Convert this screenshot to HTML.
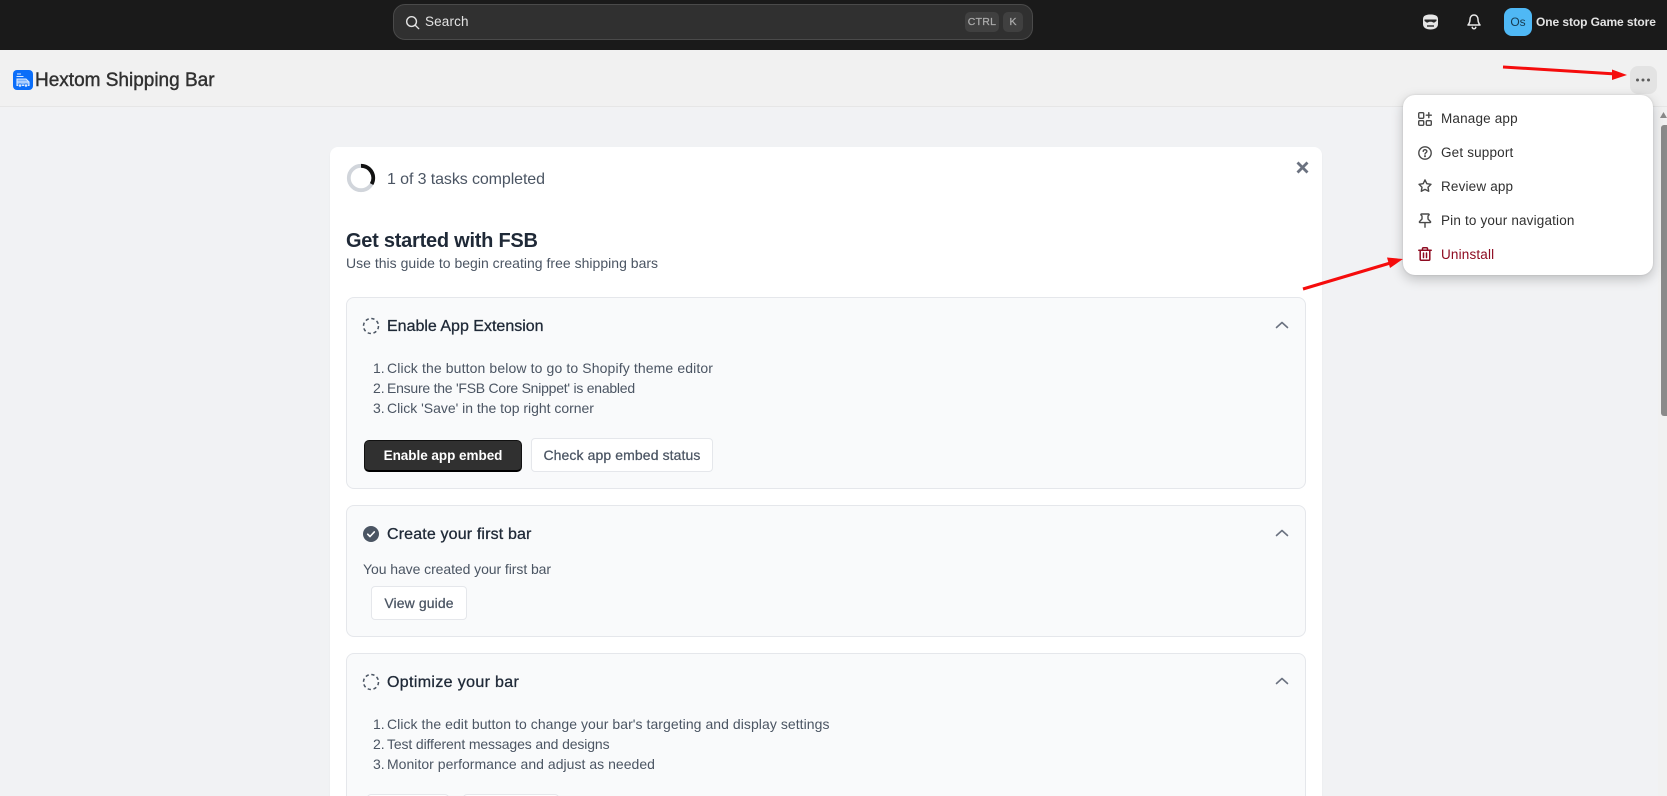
<!DOCTYPE html>
<html><head><meta charset="utf-8"><title>Hextom Shipping Bar</title>
<style>
html,body{margin:0;padding:0;width:1667px;height:796px;overflow:hidden;background:#f1f2f4;font-family:"Liberation Sans",sans-serif}
*{box-sizing:border-box}
#w{position:absolute;left:0;top:0;width:1667px;height:796px;overflow:hidden;background:#f1f2f4}
.a{position:absolute}
.t{position:absolute;white-space:nowrap;line-height:20px;height:20px}
svg{position:absolute;display:block;overflow:visible}
.item{position:absolute;left:346px;width:960px;background:#f9fafb;border:1px solid #e5e7eb;border-radius:8px}
.h{font-size:16px;color:#1f2937;-webkit-text-stroke:.3px #1f2937}
.b{font-size:14px;color:#4b5563}
.btn{position:absolute;background:#fff;border:1px solid #e5e7eb;border-radius:4px;color:#4b5563;font-size:14px;text-align:center;-webkit-text-stroke:.25px #4b5563;letter-spacing:.1px;line-height:32px}
.m{font-size:13.5px;color:#303030;letter-spacing:.17px;left:1441px}
.chev{fill:none;stroke:#6b7280;stroke-width:1.6;stroke-linecap:round;stroke-linejoin:round}
</style></head><body><div id="w">

<!-- top bar -->
<div class="a" style="left:0;top:0;width:1667px;height:50px;background:#1a1a1a"></div>
<div class="a" style="left:393px;top:4px;width:640px;height:36px;background:#303030;border:1px solid #4a4a4a;border-radius:12px"></div>
<svg style="left:405px;top:15px" width="15" height="15" viewBox="0 0 16 16" fill="none" stroke="#e3e3e3" stroke-width="1.500" stroke-linecap="round"><circle cx="7" cy="7" r="5.200"/><path d="M11 11l3.600 3.600"/></svg>
<div class="t" style="left:425px;top:12px;color:#e3e3e3;font-size:13.500px;letter-spacing:.15px">Search</div>
<div class="a" style="left:965px;top:12px;width:34px;height:20px;background:#404040;border-radius:5px;color:#ababab;font-size:10.500px;text-align:center;line-height:20px;letter-spacing:.3px;-webkit-text-stroke:.25px #ababab">CTRL</div>
<div class="a" style="left:1003px;top:12px;width:20px;height:20px;background:#404040;border-radius:5px;color:#ababab;font-size:10.500px;text-align:center;line-height:20px;-webkit-text-stroke:.25px #ababab">K</div>
<svg style="left:1422px;top:14px" width="17" height="16" viewBox="0 0 17 16"><path d="M1 5C1 1.800 4 .500 8.500 .500S16 1.800 16 5v5c0 3.500-3 5.500-7.500 5.500S1 13.500 1 10z" fill="#e6e6e6"/><path d="M2.500 5.500h12v1.500l-2.500 1.800-2.500-1H7.500l-2.500 1-2.500-1.800z" fill="#2a2a2a"/><path d="M5 12h7" stroke="#2a2a2a" stroke-width="1.400"/></svg>
<svg style="left:1467px;top:14px" width="14" height="16" viewBox="0 0 14 16" fill="none" stroke="#e8e8e8" stroke-width="1.500" stroke-linejoin="round" stroke-linecap="round"><path d="M7 1C4.500 1 3 3 3 5.500c0 2.800-.7 4-2 5.500h12c-1.300-1.500-2-2.700-2-5.500C11 3 9.500 1 7 1z"/><path d="M5.200 13.300c.3 1 1 1.500 1.800 1.500s1.500-.5 1.800-1.500"/></svg>
<div class="a" style="left:1504px;top:8px;width:28px;height:28px;background:#4fb8f5;border-radius:8px;color:#173a50;font-size:12px;text-align:center;line-height:28px">Os</div>
<div class="t" style="left:1536px;top:12px;color:#e3e3e3;font-size:12px;font-weight:bold;letter-spacing:-.08px">One stop Game store</div>

<!-- app header -->
<div class="a" style="left:0;top:50px;width:1667px;height:57px;background:#f1f1f1;border-bottom:1px solid #e6e6e6"></div>
<div class="a" style="left:13px;top:70px;width:20px;height:20px;background:#0b6ef9;border-radius:4px"></div>
<svg style="left:13px;top:70px" width="20" height="20" viewBox="0 0 20 20" fill="none" stroke="#dcebff" stroke-width="1.100"><path d="M4 4h4M3.500 6.500h7"/><path d="M4 9h9l3 3v3.500H4z" fill="#7fb4fb"/><path d="M4.500 12h11" stroke="#cfe3ff"/><circle cx="7" cy="15.500" r="1.600" fill="#dcebff" stroke="#0b6ef9" stroke-width=".6"/><circle cx="13" cy="15.500" r="1.600" fill="#dcebff" stroke="#0b6ef9" stroke-width=".6"/></svg>
<div class="t" style="left:35px;top:70px;height:22px;line-height:22px;font-size:19px;color:#303030;-webkit-text-stroke:.4px #303030">Hextom Shipping Bar</div>
<div class="a" style="left:1630px;top:66px;width:27px;height:28px;background:#e3e3e3;border-radius:8px"></div>
<svg style="left:1630px;top:66px" width="27" height="28" viewBox="0 0 27 28" fill="#5c5c5c"><circle cx="7.500" cy="14" r="1.500"/><circle cx="13" cy="14" r="1.500"/><circle cx="18.500" cy="14" r="1.500"/></svg>

<!-- scrollbar -->
<div class="a" style="left:1658px;top:107px;width:9px;height:689px;background:#f1f1f1"></div>
<div class="a" style="left:1661px;top:125px;width:6px;height:291px;background:#8a8a8a;border-radius:3px 0 0 3px"></div>
<svg style="left:1660px;top:112px" width="7" height="6" viewBox="0 0 7 6"><path d="M3.500 0L7 6H0z" fill="#8a8a8a"/></svg>

<!-- main card -->
<div class="a" style="left:330px;top:147px;width:992px;height:660px;background:#fff;border-radius:8px;box-shadow:0 1px 2px rgba(0,0,0,.04)"></div>
<svg style="left:346px;top:163px" width="30" height="30" viewBox="0 0 30 30" fill="none" stroke-width="3.800"><circle cx="15" cy="15" r="12.200" stroke="#d1d5db"/><path d="M15 2.800A12.200 12.200 0 0 1 25.600 21.100" stroke="#111"/></svg>
<div class="t" style="left:387px;top:170px;font-size:16px;color:#4b5563;letter-spacing:-.1px">1 of 3 tasks completed</div>
<svg style="left:1296px;top:161px" width="13" height="13" viewBox="0 0 13 13" fill="none" stroke="#6b7280" stroke-width="2.800"><path d="M1.500 1.500l10 10M11.500 1.500l-10 10"/></svg>
<div class="t" style="left:346px;top:229px;height:24px;line-height:24px;font-size:20px;font-weight:bold;color:#1f2937;letter-spacing:-.25px">Get started with FSB</div>
<div class="t" style="left:346px;top:253px;font-size:14px;color:#4b5563;letter-spacing:.015px">Use this guide to begin creating free shipping bars</div>

<!-- item 1 -->
<div class="item" style="top:297px;height:192px"></div>
<svg style="left:362px;top:317px" width="18" height="18" viewBox="0 0 18 18" fill="none" stroke="#4b5563" stroke-width="1.500"><circle cx="9" cy="9" r="7.500" stroke-dasharray="3.300 2.600"/></svg>
<div class="t h" style="left:387px;top:317px">Enable App Extension</div>
<svg class="chev" style="left:1275px;top:321px" width="14" height="8" viewBox="0 0 14 8"><path d="M1.500 6.500L7 1.500l5.500 5"/></svg>
<div class="t b" style="left:373px;top:358px">1.</div><div class="t b" style="left:387px;top:358px;letter-spacing:.12px">Click the button below to go to Shopify theme editor</div>
<div class="t b" style="left:373px;top:378px">2.</div><div class="t b" style="left:387px;top:378px;letter-spacing:-.24px">Ensure the 'FSB Core Snippet' is enabled</div>
<div class="t b" style="left:373px;top:398px">3.</div><div class="t b" style="left:387px;top:398px;letter-spacing:-.02px">Click 'Save' in the top right corner</div>
<div class="a" style="left:364px;top:440px;width:158px;height:32px;background:#303030;border:1px solid #111;border-bottom:2px solid #000;border-radius:5px;color:#fff;font-size:13.500px;font-weight:bold;text-align:center;line-height:30px;letter-spacing:-.03px">Enable app embed</div>
<div class="btn" style="left:531px;top:438px;width:182px;height:34px">Check app embed status</div>

<!-- item 2 -->
<div class="item" style="top:505px;height:132px"></div>
<svg style="left:363px;top:526px" width="16" height="16" viewBox="0 0 16 16"><circle cx="8" cy="8" r="8" fill="#4b5563"/><path d="M4.700 8.200l2.300 2.300 4.300-4.600" fill="none" stroke="#fff" stroke-width="1.600" stroke-linecap="round" stroke-linejoin="round"/></svg>
<div class="t h" style="left:387px;top:525px;letter-spacing:.15px">Create your first bar</div>
<svg class="chev" style="left:1275px;top:529px" width="14" height="8" viewBox="0 0 14 8"><path d="M1.500 6.500L7 1.500l5.500 5"/></svg>
<div class="t b" style="left:363px;top:559px;letter-spacing:-.07px">You have created your first bar</div>
<div class="btn" style="left:371px;top:586px;width:96px;height:34px">View guide</div>

<!-- item 3 -->
<div class="item" style="top:653px;height:170px"></div>
<svg style="left:362px;top:673px" width="18" height="18" viewBox="0 0 18 18" fill="none" stroke="#4b5563" stroke-width="1.500"><circle cx="9" cy="9" r="7.500" stroke-dasharray="3.300 2.600"/></svg>
<div class="t h" style="left:387px;top:673px;letter-spacing:.35px">Optimize your bar</div>
<svg class="chev" style="left:1275px;top:677px" width="14" height="8" viewBox="0 0 14 8"><path d="M1.500 6.500L7 1.500l5.500 5"/></svg>
<div class="t b" style="left:373px;top:714px">1.</div><div class="t b" style="left:387px;top:714px;letter-spacing:.055px">Click the edit button to change your bar's targeting and display settings</div>
<div class="t b" style="left:373px;top:734px">2.</div><div class="t b" style="left:387px;top:734px;letter-spacing:-.13px">Test different messages and designs</div>
<div class="t b" style="left:373px;top:754px">3.</div><div class="t b" style="left:387px;top:754px;letter-spacing:.025px">Monitor performance and adjust as needed</div>
<div class="a" style="left:367px;top:794px;width:82px;height:34px;background:#fff;border:1px solid #e5e7eb;border-radius:4px"></div>
<div class="a" style="left:463px;top:794px;width:96px;height:34px;background:#fff;border:1px solid #e5e7eb;border-radius:4px"></div>

<!-- dropdown menu -->
<div class="a" style="left:1403px;top:95px;width:250px;height:180px;background:#fff;border-radius:12px;box-shadow:0 4px 12px rgba(0,0,0,.22),0 0 2px rgba(0,0,0,.12)"></div>
<svg style="left:1418px;top:112px" width="14" height="14" viewBox="0 0 14 14" fill="none" stroke="#4a4a4a" stroke-width="1.400" stroke-linecap="round" stroke-linejoin="round"><rect x=".7" y=".7" width="5" height="5.600" rx="1"/><rect x=".7" y="8.700" width="5" height="4.600" rx="1"/><rect x="8.300" y="8.700" width="5" height="4.600" rx="1"/><path d="M10.800 .7v5M8.300 3.200h5"/></svg>
<div class="t m" style="top:109px">Manage app</div>
<svg style="left:1418px;top:146px" width="14" height="14" viewBox="0 0 14 14" fill="none" stroke="#4a4a4a" stroke-width="1.400" stroke-linecap="round"><circle cx="7" cy="7" r="6.200"/><path d="M5.200 5.400C5.200 4.300 6.100 3.700 7 3.700s1.900.6 1.900 1.600c0 1.400-1.900 1.400-1.900 2.800"/><circle cx="7" cy="10.200" r=".35" fill="#4a4a4a"/></svg>
<div class="t m" style="top:143px">Get support</div>
<svg style="left:1418px;top:179px" width="14" height="14" viewBox="0 0 14 14" fill="none" stroke="#4a4a4a" stroke-width="1.400" stroke-linejoin="round"><path d="M7 .9l1.800 3.800 4.200.6-3 2.900.7 4.100L7 10.400l-3.700 1.900.7-4.100-3-2.900 4.200-.6z"/></svg>
<div class="t m" style="top:177px">Review app</div>
<svg style="left:1418px;top:213px" width="14" height="15" viewBox="0 0 14 15" fill="none" stroke="#4a4a4a" stroke-width="1.400" stroke-linecap="round" stroke-linejoin="round"><path d="M3.500 1h7c.6 0 .8.600.5 1L10 3v3l2.500 2.600c.3.500 0 1-.5 1H2c-.5 0-.8-.5-.5-1L4 6V3L3 2c-.3-.4-.1-1 .5-1zM7 9.600v4.600"/></svg>
<div class="t m" style="top:211px">Pin to your navigation</div>
<svg style="left:1418px;top:247px" width="14" height="14" viewBox="0 0 14 14" fill="none" stroke="#8e0b21" stroke-width="1.500" stroke-linecap="round" stroke-linejoin="round"><path d="M.8 3.200h12.400M4.500 3.200V1.800c0-.6.400-1 1-1h3c.6 0 1 .4 1 1v1.400M2.200 3.200v9c0 .6.400 1 1 1h7.600c.6 0 1-.4 1-1v-9M5.500 6v4.500M8.500 6v4.500"/></svg>
<div class="t m" style="top:245px;color:#8e0b21">Uninstall</div>

<!-- red arrows -->
<svg style="left:0;top:0" width="1667" height="796" viewBox="0 0 1667 796">
<path d="M1503 67L1616 74" stroke="#f50c0c" stroke-width="3" fill="none"/><path d="M1627 75L1612 69.500v10.500z" fill="#f50c0c"/>
<path d="M1303 289L1392 262.500" stroke="#f50c0c" stroke-width="3" fill="none"/><path d="M1403 259L1387 257.500l3 10.500z" fill="#f50c0c"/>
</svg>
</div></body></html>
